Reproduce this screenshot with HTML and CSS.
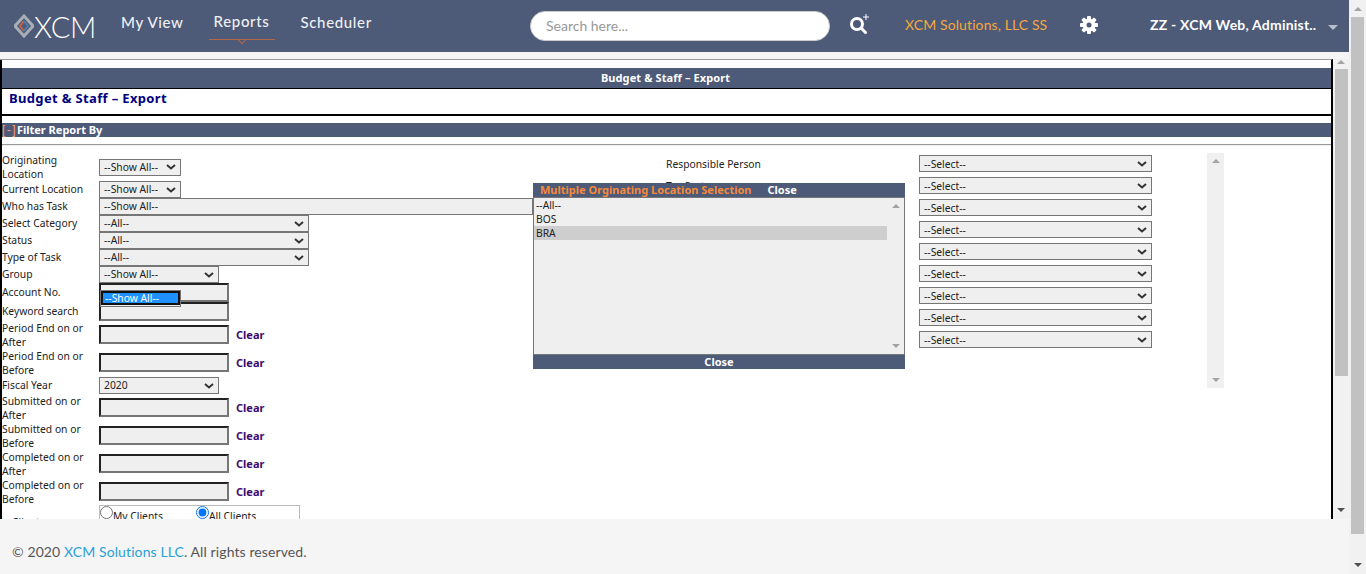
FILE: index.html
```html
<!DOCTYPE html>
<html>
<head>
  <title>Budget &amp; Staff - Export</title>
  <link rel="stylesheet" href="styles.css">
</head>
<body>
  <div class="page">
    <div class="main">
      <header class="topbar">
        <div class="logo">
          <svg class="logo-mark" width="20" height="24" viewBox="0 0 20 24">
            <path d="M10 2 L19 12 L10 22 L1 12 Z" fill="none" stroke="#a9adb5" stroke-width="3"/>
            <path d="M10 7 L6 12 L10 17" fill="none" stroke="#c8633f" stroke-width="2"/>
            <path d="M10 7 L14 12 L10 17" fill="none" stroke="#4f7fb0" stroke-width="2"/>
          </svg>
          <span class="logo-text">XCM</span>
        </div>
        <nav class="nav">
          <a class="nav-item">My View</a>
          <a class="nav-item active">Reports</a>
          <a class="nav-item">Scheduler</a>
        </nav>
        <div class="search">Search here...</div>
        <svg class="search-icon" width="22" height="22" viewBox="0 0 22 22">
          <circle cx="8" cy="11" r="5.5" fill="none" stroke="#fff" stroke-width="3"/>
          <path d="M12 15 L16.5 19.5" stroke="#fff" stroke-width="3" stroke-linecap="round"/>
          <path d="M17 1 V7 M14 4 H20" stroke="#fff" stroke-width="1"/>
        </svg>
        <span class="company">XCM Solutions, LLC SS</span>
        <svg class="gear" width="18" height="18" viewBox="0 0 18 18">
          <g fill="#fff">
            <rect x="7" y="0" width="4" height="18" rx="1"/>
            <rect x="7" y="0" width="4" height="18" rx="1" transform="rotate(45 9 9)"/>
            <rect x="7" y="0" width="4" height="18" rx="1" transform="rotate(90 9 9)"/>
            <rect x="7" y="0" width="4" height="18" rx="1" transform="rotate(135 9 9)"/>
          </g>
          <circle cx="9" cy="9" r="5" fill="none" stroke="#fff" stroke-width="3"/>
          <circle cx="9" cy="9" r="2.5" fill="#4d5a78"/>
        </svg>
        <span class="user">ZZ - XCM Web, Administ..</span>
        <span class="caret"></span>
      </header>

      <div class="frame">
        <div class="content">
          <div class="title-bar">Budget &amp; Staff – Export</div>
          <div class="title-box">Budget &amp; Staff – Export</div>
          <div class="section-bar"><span class="toggle">[-]</span>Filter Report By</div>
          <div class="rule"></div>

          <div class="filters">
            <div class="left-col">
              <div class="row h-28 flat"><label>Originating Location</label><select class="sel-s"><option>--Show All--</option></select></div>
              <div class="row h-17"><label>Current Location</label><select class="sel-s"><option>--Show All--</option></select></div>
              <div class="row h-17"><label>Who has Task</label><select class="sel-xl"><option>--Show All--</option></select></div>
              <div class="row h-17"><label>Select Category</label><select class="sel-l"><option>--All--</option></select></div>
              <div class="row h-17"><label>Status</label><select class="sel-l"><option>--All--</option></select></div>
              <div class="row h-17"><label>Type of Task</label><select class="sel-l"><option>--All--</option></select></div>
              <div class="row h-17"><label>Group</label><select class="sel-m"><option>--Show All--</option></select></div>
              <div class="row h-19"><label>Account No.</label><input type="text"></div>
              <div class="row h-18 flat"><label>Keyword search</label><input type="text"></div>
              <div class="row h-28 dated"><label>Period End on or After</label><input type="text"><a class="clear">Clear</a></div>
              <div class="row h-28 dated"><label>Period End on or Before</label><input type="text"><a class="clear">Clear</a></div>
              <div class="row h-17 flat fiscal"><label>Fiscal Year</label><select class="sel-m"><option>2020</option></select></div>
              <div class="row h-28 dated"><label>Submitted on or After</label><input type="text"><a class="clear">Clear</a></div>
              <div class="row h-28 dated"><label>Submitted on or Before</label><input type="text"><a class="clear">Clear</a></div>
              <div class="row h-28 dated"><label>Completed on or After</label><input type="text"><a class="clear">Clear</a></div>
              <div class="row h-28 dated"><label>Completed on or Before</label><input type="text"><a class="clear">Clear</a></div>
              <div class="row h-28 clients-row">
                <label>Clients</label>
                <div class="radio-box">
                  <span class="radio-item"><input type="radio" name="clients">My Clients</span>
                  <span class="radio-item"><input type="radio" name="clients" checked>All Clients</span>
                </div>
              </div>
            </div>

            <div class="mid-col">
              <span>Responsible Person</span>
              <span>Tax Partner</span>
            </div>

            <div class="right-col">
              <select><option>--Select--</option></select>
              <select><option>--Select--</option></select>
              <select><option>--Select--</option></select>
              <select><option>--Select--</option></select>
              <select><option>--Select--</option></select>
              <select><option>--Select--</option></select>
              <select><option>--Select--</option></select>
              <select><option>--Select--</option></select>
              <select><option>--Select--</option></select>
            </div>

            <div class="mini-scroll">
              <span class="arrow-up grey"></span>
              <span class="arrow-down grey"></span>
            </div>
          </div>

          <!-- open dropdown of the Group select -->
          <div class="open-option"><span>--Show All--</span></div>

          <!-- popup for multiple location selection -->
          <div class="popup">
            <div class="popup-head"><span class="popup-title">Multiple Orginating Location Selection</span><a>Close</a></div>
            <div class="popup-list">
              <div class="popup-items">
                <div>--All--</div>
                <div>BOS</div>
                <div class="picked">BRA</div>
              </div>
              <div class="popup-scroll">
                <span class="arrow-up grey"></span>
                <span class="arrow-down grey"></span>
              </div>
            </div>
            <div class="popup-foot">Close</div>
          </div>
        </div>

        <div class="scrollbar inner">
          <span class="arrow-up"></span>
          <div class="thumb"></div>
          <span class="arrow-down dark"></span>
        </div>
      </div>

      <footer class="footer">© 2020 <a>XCM Solutions LLC</a>. All rights reserved.</footer>
    </div>

    <div class="scrollbar outer">
      <span class="arrow-up"></span>
      <div class="thumb"></div>
      <span class="arrow-down dark"></span>
    </div>
  </div>
</body>
</html>
```

FILE: styles.css
```css
html, body {
  margin: 0;
  padding: 0;
  height: 574px;
  overflow: hidden;
}
body {
  font-family: "Noto Sans", Arial, sans-serif;
  font-size: 10.3px;
  color: #222;
}
.page {
  display: flex;
  height: 574px;
}
.main {
  width: 1349px;
  display: flex;
  flex-direction: column;
  background-color: #f5f5f5;
}

/* top bar */
.topbar {
  height: 52px;
  flex: none;
  background-color: #4d5a78;
  color: white;
  display: flex;
  align-items: center;
  font-family: Lato, sans-serif;
}
.logo {
  display: flex;
  align-items: center;
  margin-left: 14px;
  width: 107px;
}
.logo-mark {
  flex: none;
}
.logo-text {
  font-size: 29px;
  font-weight: 300;
  letter-spacing: -.4px;
  color: white;
}
.nav {
  display: flex;
  width: 409px;
  margin-top: -9px;
}
.nav-item {
  font-size: 15px;
  font-weight: 500;
  letter-spacing: .65px;
  margin-right: 30px;
  color: #eef0f4;
}
.nav-item.active {
  position: relative;
  top: -1px;
  margin-right: 31px;
}
.nav-item.active::after {
  content: "";
  position: absolute;
  left: -5px;
  right: -6px;
  top: 27px;
  border-bottom: 1px solid #b5654a;
}
.nav-item.active::before {
  content: "";
  position: absolute;
  left: 50%;
  top: 25px;
  width: 5px;
  height: 5px;
  margin-left: -3px;
  border-right: 1px solid #b5654a;
  border-bottom: 1px solid #b5654a;
  transform: rotate(45deg);
}
.search {
  width: 283px;
  height: 28px;
  line-height: 28px;
  padding-left: 15px;
  background-color: white;
  border: 1px solid #ccc;
  border-radius: 15px;
  color: #999;
  font-size: 14px;
}
.search-icon {
  margin-left: 19px;
  margin-top: -4px;
  flex: none;
}
.company {
  color: #f5a83f;
  font-size: 14px;
  letter-spacing: .1px;
  margin-left: 34px;
  margin-top: -3px;
  width: 175px;
}
.gear {
  flex: none;
  margin-top: -3px;
}
.user {
  font-size: 14px;
  font-weight: 700;
  letter-spacing: .2px;
  margin-left: 52px;
  margin-top: -3px;
  width: 178px;
  white-space: nowrap;
}
.caret {
  width: 0;
  height: 0;
  margin-top: 2px;
  border-left: 5px solid transparent;
  border-right: 5px solid transparent;
  border-top: 5px solid #b7bdcb;
}

/* framed report */
.frame {
  height: 460px;
  flex: none;
  margin-top: 7px;
  display: flex;
  background-color: #f5f5f5;
}
.content {
  width: 1331px;
  flex: none;
  background-color: white;
  border-top: 1px solid #999;
  border-right: 2px solid black;
  position: relative;
  overflow: hidden;
}
.content::before {
  content: "";
  position: absolute;
  left: 0;
  top: 0;
  bottom: 0;
  width: 2px;
  background-color: black;
  z-index: 3;
}
.title-bar {
  margin-top: 8px;
  height: 20px;
  line-height: 20px;
  background-color: #4d5a78;
  color: white;
  font-weight: bold;
  font-size: 11px;
  letter-spacing: .1px;
  text-align: center;
}
.title-box {
  height: 25px;
  padding-left: 9px;
  border-top: 1px solid black;
  border-bottom: 2px solid black;
  color: #000080;
  font-weight: bold;
  font-size: 13px;
  letter-spacing: .35px;
  line-height: 19px;
}
.section-bar {
  margin-top: 7px;
  height: 14px;
  line-height: 14px;
  background-color: #4d5a78;
  color: white;
  font-weight: bold;
  font-size: 11px;
  padding-left: 2px;
}
.toggle {
  color: #ff9a5c;
  font-family: "Liberation Sans", Arial, sans-serif;
  font-size: 12px;
  font-weight: normal;
  letter-spacing: 1.4px;
}
.rule {
  margin-top: 7px;
  border-top: 1px solid #999;
  border-bottom: 1px solid #eee;
}

/* filter form */
.filters {
  display: flex;
  align-items: flex-start;
  margin-top: 7px;
}
.left-col {
  width: 533px;
  flex: none;
  padding-left: 2px;
  box-sizing: border-box;
}
.row {
  display: flex;
  align-items: center;
}
.row label {
  width: 97px;
  flex: none;
  line-height: 14px;
  margin-top: -2px;
}
.row.flat label {
  margin-top: 0;
}
.row.dated label {
  margin-top: 2px;
}
.row.fiscal select {
  margin-top: 2px;
}
.h-17 { height: 17px; }
.h-18 { height: 18px; }
.h-19 { height: 19px; }
.h-28 { height: 28px; }
select {
  height: 17px;
  box-sizing: border-box;
  appearance: none;
  background-color: #efefef;
  background-image: url("data:image/svg+xml,%3Csvg xmlns='http://www.w3.org/2000/svg' width='10' height='6'%3E%3Cpath d='M1 1l4 3.5L9 1' fill='none' stroke='%23333' stroke-width='2'/%3E%3C/svg%3E");
  background-repeat: no-repeat;
  background-position: right 4px center;
  border: 1px solid #767676;
  border-radius: 0;
  padding: 0 0 0 4px;
  font-family: "Noto Sans", Arial, sans-serif;
  font-size: 10.3px;
  line-height: 15px;
  color: #222;
}
.sel-s { width: 82px; }
.sel-m { width: 120px; }
.sel-l { width: 210px; }
.sel-xl { width: 520px; background-image: none; }
input[type="text"] {
  width: 130px;
  height: 19px;
  box-sizing: border-box;
  background-color: #efefef;
  border: 2px solid;
  border-color: #222 #767676 #767676 #222;
  padding: 0;
}
.clear {
  margin-left: 7px;
  color: #3d0a6e;
  font-weight: bold;
  font-size: 11px;
}
.clients-row {
  align-items: flex-start;
}
.row.clients-row label {
  margin-top: 10px;
  padding-left: 10px;
  box-sizing: border-box;
}
.radio-box {
  width: 199px;
  height: 24px;
  border: 1px solid #bbb;
  display: flex;
}
.radio-item {
  width: 96px;
  display: flex;
  align-items: flex-start;
  line-height: 20px;
}
input[type="radio"] {
  margin: 0;
  width: 13px;
  height: 13px;
}

.mid-col {
  width: 386px;
  flex: none;
  display: flex;
  flex-direction: column;
  padding-left: 133px;
  box-sizing: border-box;
  line-height: 22px;
}
.right-col {
  width: 288px;
  flex: none;
  display: flex;
  flex-direction: column;
  gap: 5px;
  margin-top: 2px;
}
.right-col select {
  width: 233px;
  padding-top: 1px;
}
.mini-scroll {
  width: 17px;
  height: 235px;
  flex: none;
  background-color: #f0f0f0;
  display: flex;
  flex-direction: column;
  justify-content: space-between;
  align-items: center;
  padding: 6px 0;
  box-sizing: border-box;
}

/* scroll arrows */
.arrow-up, .arrow-down {
  width: 0;
  height: 0;
  border-left: 4px solid transparent;
  border-right: 4px solid transparent;
  flex: none;
}
.arrow-up { border-bottom: 4px solid #a3a3a3; }
.arrow-down { border-top: 4px solid #a3a3a3; }
.arrow-down.dark { border-top-color: #505050; }

.scrollbar {
  display: flex;
  flex-direction: column;
  align-items: center;
  background-color: #f1f1f1;
  box-sizing: border-box;
}
.scrollbar .thumb {
  background-color: #c1c1c1;
}
.scrollbar .arrow-down {
  margin-top: auto;
}
.scrollbar.outer {
  width: 17px;
  height: 574px;
  padding: 7px 0 7px;
}
.scrollbar.outer .thumb {
  width: 13px;
  height: 517px;
  margin-top: 6px;
}
.scrollbar.inner {
  width: 16px;
  padding: 1px 0 7px;
}
.scrollbar.inner .thumb {
  width: 13px;
  height: 307px;
  margin-top: 5px;
}

/* open select list */
.open-option {
  position: absolute;
  left: 100px;
  top: 230px;
  width: 81px;
  height: 17px;
  box-sizing: border-box;
  background-color: #efefef;
  border: 1px solid #767676;
  z-index: 4;
}
.open-option span {
  display: block;
  height: 14px;
  line-height: 11px;
  border: 2px solid #111;
  background-color: #1e90ff;
  color: white;
  padding-left: 2px;
  box-sizing: border-box;
}

/* location popup */
.popup {
  position: absolute;
  left: 533px;
  top: 123px;
  width: 372px;
  z-index: 5;
}
.popup-head {
  height: 14px;
  line-height: 14px;
  background-color: #4d5a78;
  color: white;
  font-weight: bold;
  font-size: 11px;
  padding-left: 7px;
}
.popup-title {
  color: #f58a3c;
  margin-right: 16px;
}
.popup-list {
  height: 158px;
  box-sizing: border-box;
  background-color: #efefef;
  border: 1px solid #767676;
  display: flex;
}
.popup-items {
  width: 353px;
  flex: none;
  line-height: 14px;
}
.popup-items div {
  padding-left: 2px;
}
.popup-items .picked {
  background-color: #cecece;
}
.popup-scroll {
  flex: 1;
  display: flex;
  flex-direction: column;
  justify-content: space-between;
  align-items: center;
  padding: 6px 0;
}
.popup-foot {
  height: 14px;
  line-height: 14px;
  background-color: #4d5a78;
  color: white;
  font-weight: bold;
  font-size: 11px;
  text-align: center;
}

.footer {
  flex: 1;
  padding: 24px 0 0 12px;
  font-family: Lato, sans-serif;
  font-size: 14px;
  letter-spacing: .1px;
  color: #555;
  background-color: #f5f5f5;
}
.footer a {
  color: #2a9fd8;
}
```
